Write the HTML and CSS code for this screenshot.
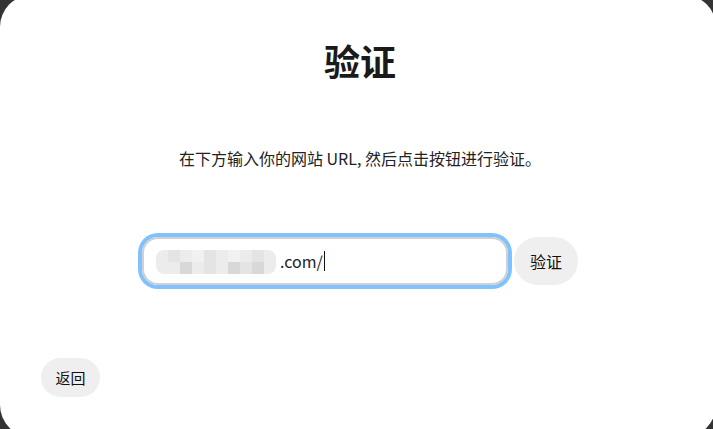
FILE: index.html
```html
<!DOCTYPE html>
<html lang="zh-CN">
  <head>
    <meta charset="UTF-8" />
    <title>验证</title>
    <link rel="stylesheet" href="styles.css">
  </head>
  <body>
    <div class="modal">
      <h1 class="title">验证</h1>

      <p class="hint">在下方输入你的网站 URL, 然后点击按钮进行验证。</p>

      <div class="verify-row">
        <div class="url-field">
          <!-- 打码部分 -->
          <span class="mosaic">
            <i class="a"></i><i class="b"></i><i class="a"></i><i class="c"></i><i class="b"></i><i class="a"></i><i class="c"></i><i class="a"></i><i class="b"></i><i class="a"></i>
            <i class="a"></i><i class="a"></i><i class="d"></i><i class="a"></i><i class="b"></i><i class="a"></i><i class="d"></i><i class="b"></i><i class="d"></i><i class="a"></i>
          </span>
          <span class="url-text">.com/</span>
          <span class="caret"></span>
        </div>
        <button class="btn btn-verify">验证</button>
      </div>

      <div class="footer">
        <button class="btn btn-back">返回</button>
      </div>
    </div>
  </body>
</html>
```

FILE: styles.css
```css
html,
body {
  margin: 0;
  height: 100%;
  overflow: hidden;
}

body {
  background-color: #333333;
  font-family: "Noto Sans CJK SC", "Noto Sans", sans-serif;
  color: #1a1a1a;
}

.modal {
  background: #ffffff;
  border-radius: 32px;
  margin: -5px -3px 0 0;
  height: 442px;
  padding: 43px 0 0 4px;
  box-sizing: border-box;
}

.title {
  margin: 0;
  text-align: center;
  font-size: 36px;
  line-height: 44px;
  font-weight: 700;
}

.hint {
  margin: 64px 0 0;
  text-align: center;
  font-size: 16px;
  line-height: 24px;
  color: #222;
}

.verify-row {
  display: flex;
  justify-content: center;
  align-items: center;
  gap: 6px;
  margin-top: 67px;
}

.url-field {
  width: 366px;
  height: 48px;
  box-sizing: border-box;
  border: 2px solid #d0d0d0;
  border-radius: 16px;
  box-shadow: 0 0 0 4px #80c2ff;
  display: flex;
  align-items: center;
  padding-left: 12px;
  font-size: 16px;
  color: #222;
}

.mosaic {
  display: grid;
  grid-template-columns: repeat(10, 12px);
  grid-auto-rows: 12px;
  border-radius: 8px;
  overflow: hidden;
  margin-top: 2px;
}

.mosaic i {
  display: block;
}

.mosaic .a { background: #ececec; }
.mosaic .b { background: #e4e4e4; }
.mosaic .c { background: #f1f1f1; }
.mosaic .d { background: #d8d8d8; }

.url-text {
  margin-left: 4px;
}

.caret {
  width: 1px;
  height: 20px;
  background: #111;
  margin-left: 1px;
}

.btn {
  border: none;
  background: #efefef;
  font-family: inherit;
  font-size: 16px;
  color: #111;
  cursor: pointer;
  padding: 0;
}

.btn-verify {
  width: 64px;
  height: 48px;
  border-radius: 24px;
}

.footer {
  margin-top: 73px;
  padding-left: 37px;
}

.btn-back {
  width: 59px;
  height: 39px;
  border-radius: 20px;
  font-size: 15px;
}
```
